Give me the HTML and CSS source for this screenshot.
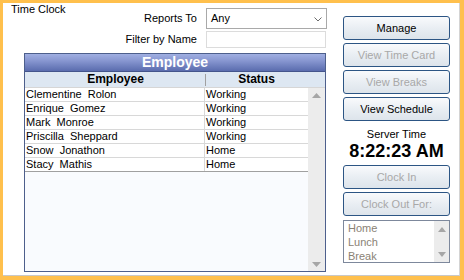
FILE: index.html
```html
<!DOCTYPE html>
<html lang="en">
<head>
    <meta charset="UTF-8">
    <meta name="viewport" content="width=device-width, initial-scale=1.0">
    <title>Time Clock</title>
    <link rel="stylesheet" href="styles.css">
</head>
<body>
    <div class="panel">
        <div class="main">
            <div class="top">
                <div class="title">Time Clock</div>
                <div class="filters">
                    <label class="field-label">Reports To</label>
                    <div class="select">
                        <span>Any</span>
                        <svg class="chevron" width="8" height="5" viewBox="0 0 8 5"><polyline points="0.5,0.5 4,4 7.5,0.5" fill="none" stroke="#6d6d6d" stroke-width="1"/></svg>
                    </div>
                    <label class="field-label">Filter by Name</label>
                    <input class="textbox" type="text">
                </div>
            </div>
            <div class="grid">
                <div class="grid-title">Employee</div>
                <div class="grid-head">
                    <div class="cell name">Employee</div>
                    <div class="cell status">Status</div>
                </div>
                <div class="grid-body">
                    <div class="rows">
                        <div class="row"><div class="cell name">Clementine&nbsp; Rolon</div><div class="cell status">Working</div></div>
                        <div class="row"><div class="cell name">Enrique&nbsp; Gomez</div><div class="cell status">Working</div></div>
                        <div class="row"><div class="cell name">Mark&nbsp; Monroe</div><div class="cell status">Working</div></div>
                        <div class="row"><div class="cell name">Priscilla&nbsp; Sheppard</div><div class="cell status">Working</div></div>
                        <div class="row"><div class="cell name">Snow&nbsp; Jonathon</div><div class="cell status">Home</div></div>
                        <div class="row last"><div class="cell name">Stacy&nbsp; Mathis</div><div class="cell status">Home</div></div>
                    </div>
                    <div class="scrollbar">
                        <svg width="9" height="5" viewBox="0 0 9 5"><polygon points="0,5 4.5,0 9,5" fill="#a6a6a6"/></svg>
                        <svg width="9" height="5" viewBox="0 0 9 5"><polygon points="0,0 4.5,5 9,0" fill="#a6a6a6"/></svg>
                    </div>
                </div>
            </div>
        </div>
        <div class="side">
            <button class="btn">Manage</button>
            <button class="btn" disabled>View Time Card</button>
            <button class="btn" disabled>View Breaks</button>
            <button class="btn">View Schedule</button>
            <div class="server-label">Server Time</div>
            <div class="server-time">8:22:23 AM</div>
            <button class="btn" disabled>Clock In</button>
            <button class="btn" disabled>Clock Out For:</button>
            <div class="listbox">
                <div class="items">
                    <div>Home</div>
                    <div>Lunch</div>
                    <div>Break</div>
                </div>
                <div class="scrollbar small">
                    <svg width="8" height="5" viewBox="0 0 8 5"><polygon points="0,5 4,0 8,5" fill="#a6a6a6"/></svg>
                    <svg width="8" height="5" viewBox="0 0 8 5"><polygon points="0,0 4,5 8,0" fill="#a6a6a6"/></svg>
                </div>
            </div>
        </div>
    </div>
</body>
</html>
```

FILE: styles.css
```css
html, body {
    margin: 0;
    padding: 0;
}
body {
    width: 464px;
    height: 280px;
    background-color: #ffc04d;
    font-family: "Liberation Sans", Arial, sans-serif;
    font-size: 11px;
    line-height: 13px;
    color: #000;
    overflow: hidden;
}
.panel {
    margin: 3px;
    width: 457px;
    height: 273px;
    box-sizing: border-box;
    background-color: #fff;
    border-right: 1px solid #d4d4d4;
    border-bottom: 1px solid #c8c8c8;
    padding-left: 7px;
    display: flex;
}
.main {
    width: 317px;
    display: flex;
    flex-direction: column;
}
.top {
    height: 50px;
    display: flex;
    justify-content: space-between;
}
.title {
    padding-left: 1px;
}
.filters {
    padding-top: 5px;
    display: grid;
    grid-template-columns: auto 121px;
    column-gap: 9px;
    row-gap: 2px;
    align-items: center;
    align-content: start;
}
.field-label {
    text-align: right;
}
.select {
    height: 21px;
    box-sizing: border-box;
    border: 1px solid #a9a9a9;
    display: flex;
    align-items: center;
    justify-content: space-between;
    padding: 0 4px 0 4px;
}
.chevron {
    margin-top: 1px;
}
.textbox {
    width: 120px;
    height: 17px;
    box-sizing: border-box;
    border: 1px solid #dcdcdc;
    margin: 0;
    padding: 0;
    outline: none;
}
.grid {
    margin-left: 14px;
    width: 302px;
    height: 219px;
    box-sizing: border-box;
    border: 1px solid #4d5f8c;
    display: flex;
    flex-direction: column;
    background-color: #f9fbfe;
}
.grid-title {
    height: 17px;
    border-bottom: 1px solid #44558c;
    background: linear-gradient(#a0afe2, #8796d0 40%, #5a6cae);
    color: #fff;
    font-size: 14px;
    font-weight: bold;
    line-height: 17px;
    text-align: center;
}
.grid-head {
    height: 15px;
    border-bottom: 1px solid #d6d6d6;
    background-color: #dde7f2;
    display: flex;
    font-size: 12px;
    font-weight: bold;
    line-height: 15px;
}
.grid-head .cell {
    text-align: center;
}
.grid-head .name {
    position: relative;
}
.grid-head .name::after {
    content: '';
    position: absolute;
    right: -1px;
    top: 2px;
    bottom: 1px;
    border-right: 1px solid #a0a0a0;
}
.cell.name {
    width: 180px;
    padding-left: 1px;
    box-sizing: border-box;
}
.cell.status {
    width: 103px;
    padding-left: 1px;
    box-sizing: border-box;
}
.grid-head .cell.status {
    padding-left: 0;
}
.grid-body {
    flex: 1;
    display: flex;
}
.rows {
    width: 283px;
}
.row {
    height: 13px;
    display: flex;
    background-color: #fff;
    border-bottom: 1px solid #d8d8d8;
}
.row.last {
    border-bottom-color: #a0a0a0;
}
.row .name {
    border-right: 1px solid #d8d8d8;
}
.scrollbar {
    width: 17px;
    background-color: #ececec;
    display: flex;
    flex-direction: column;
    justify-content: space-between;
    align-items: center;
    padding: 5px 0 4px;
    box-sizing: border-box;
}
.side {
    margin-left: 16px;
    width: 107px;
    padding-top: 13px;
    display: flex;
    flex-direction: column;
}
.btn {
    height: 24px;
    margin: 0 0 3px;
    padding: 0;
    border: 1px solid #2c5584;
    border-radius: 3px;
    background: linear-gradient(#f9fafc, #e9eef3 50%, #dde4eb);
    font-family: inherit;
    font-size: 11px;
    color: #000;
}
.btn:disabled {
    color: #a8a8a8;
}
.server-label {
    margin-top: 4px;
    text-align: center;
}
.server-time {
    height: 21px;
    margin-bottom: 3px;
    font-size: 18px;
    font-weight: bold;
    line-height: 21px;
    text-align: center;
}
.listbox {
    margin-top: 1px;
    height: 43px;
    box-sizing: border-box;
    border: 1px solid #7d889c;
    display: flex;
    justify-content: space-between;
}
.items {
    padding-left: 4px;
    color: #8a8275;
    line-height: 14px;
    overflow: hidden;
}
.scrollbar.small {
    width: 15px;
    padding: 6px 0 5px;
}
```
